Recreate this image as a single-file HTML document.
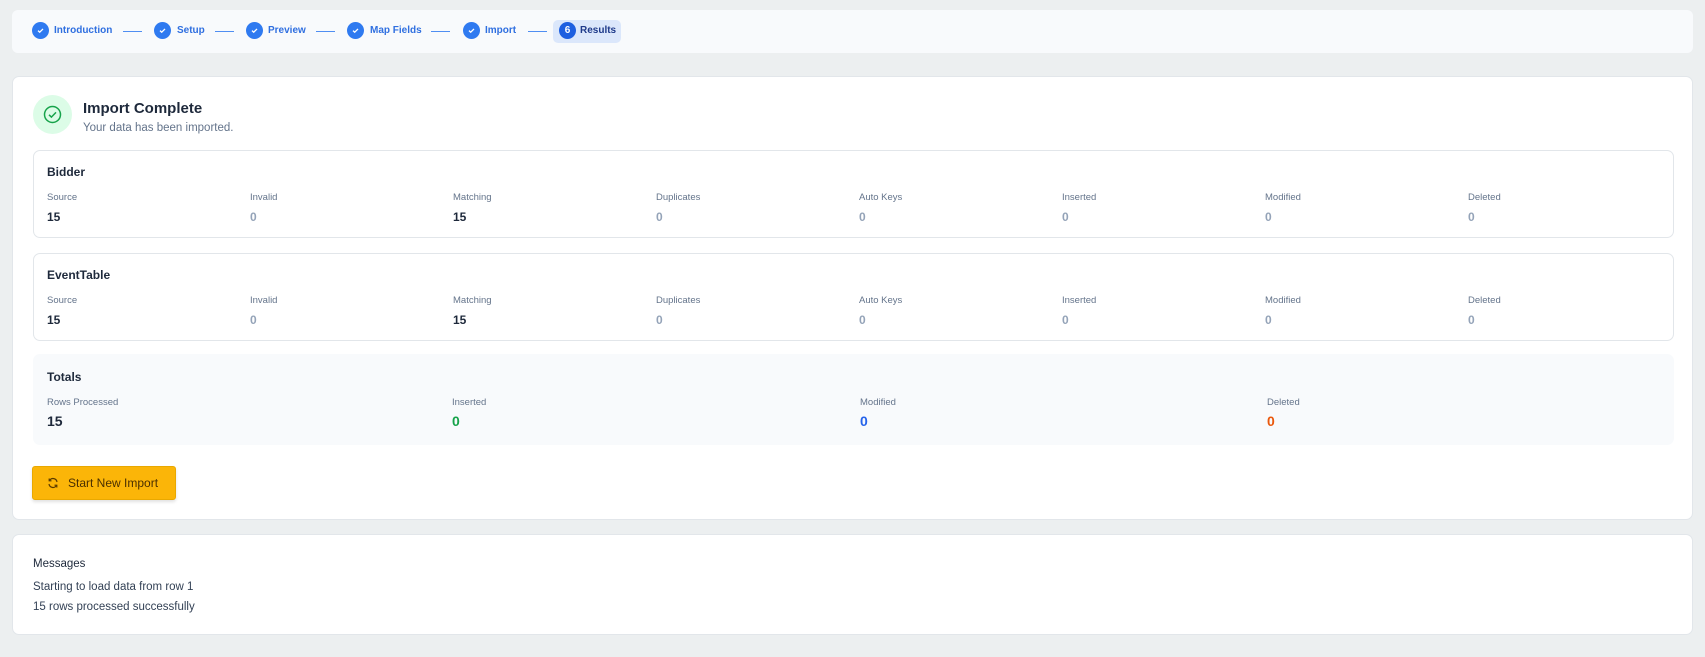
<!DOCTYPE html>
<html><head><meta charset="utf-8"><style>
*{box-sizing:border-box;margin:0;padding:0}
body{width:1705px;height:657px;background:#eceff0;font-family:"Liberation Sans",sans-serif;color:#1e293b;position:relative;overflow:hidden}
.abs{position:absolute}
.bar{left:12px;top:10px;width:1681px;height:43px;background:#f8fafc;border-radius:6px}
.c{width:17px;height:17px;border-radius:50%;background:#2f7af0;top:22px}
.c svg{position:absolute;left:4px;top:4px}
.st{top:25px;font-size:10px;font-weight:bold;color:#2f6fe0}
.ln{top:31px;height:1px;background:#4f8ef2;width:19px}
.card{background:#fff;border:1px solid #e2e6ea;border-radius:7px}
.sub{border:1px solid #e2e6ea;border-radius:7px;background:#fff}
.h{font-size:12px;font-weight:bold;color:#1e293b}
.lb{font-size:9.5px;color:#64748b}
.v{font-size:12px;font-weight:bold;color:#94a3b8}
.v.d{color:#1e293b}
</style></head><body>
<div class="abs bar"></div>
<div class="abs c" style="left:32px"><svg width="9" height="9" viewBox="0 0 9 9"><path d="M2 4.6l1.7 1.6L7 2.9" stroke="#fff" stroke-width="1.3" fill="none"/></svg></div>
<div class="abs st" style="left:54px">Introduction</div>
<div class="abs ln" style="left:123px"></div>
<div class="abs c" style="left:154px"><svg width="9" height="9" viewBox="0 0 9 9"><path d="M2 4.6l1.7 1.6L7 2.9" stroke="#fff" stroke-width="1.3" fill="none"/></svg></div>
<div class="abs st" style="left:177px">Setup</div>
<div class="abs ln" style="left:215px"></div>
<div class="abs c" style="left:246px"><svg width="9" height="9" viewBox="0 0 9 9"><path d="M2 4.6l1.7 1.6L7 2.9" stroke="#fff" stroke-width="1.3" fill="none"/></svg></div>
<div class="abs st" style="left:268px">Preview</div>
<div class="abs ln" style="left:316px"></div>
<div class="abs c" style="left:347px"><svg width="9" height="9" viewBox="0 0 9 9"><path d="M2 4.6l1.7 1.6L7 2.9" stroke="#fff" stroke-width="1.3" fill="none"/></svg></div>
<div class="abs st" style="left:370px">Map Fields</div>
<div class="abs ln" style="left:431px"></div>
<div class="abs c" style="left:463px"><svg width="9" height="9" viewBox="0 0 9 9"><path d="M2 4.6l1.7 1.6L7 2.9" stroke="#fff" stroke-width="1.3" fill="none"/></svg></div>
<div class="abs st" style="left:485px">Import</div>
<div class="abs ln" style="left:528px"></div>
<div class="abs" style="left:553px;top:20px;width:68px;height:23px;background:#dbe7fb;border-radius:5px"></div>
<div class="abs c" style="left:559px;background:#1d5fe0;color:#fff;font-size:10px;font-weight:bold;text-align:center;line-height:17px">6</div>
<div class="abs st" style="left:580px;color:#1e3a8a">Results</div>

<div class="abs card" style="left:12px;top:76px;width:1681px;height:444px"></div>
<div class="abs" style="left:33px;top:95px;width:39px;height:39px;border-radius:50%;background:#dcfce7"></div>
<svg class="abs" style="left:42px;top:104px" width="21" height="21" viewBox="0 0 21 21"><circle cx="10.5" cy="10.5" r="8" stroke="#16a34a" stroke-width="1.5" fill="none"/><path d="M7 10.8l2.4 2.3L14 8.4" stroke="#16a34a" stroke-width="1.5" fill="none"/></svg>
<div class="abs" style="left:83px;top:100px;font-size:15px;font-weight:bold;color:#1e293b">Import Complete</div>
<div class="abs" style="left:83px;top:122px;font-size:11.5px;color:#64748b">Your data has been imported.</div>

<div class="abs sub" style="left:33px;top:150px;width:1641px;height:88px"></div>
<div class="abs h" style="left:47px;top:165px">Bidder</div>
<div class="abs sub" style="left:33px;top:253px;width:1641px;height:88px"></div>
<div class="abs h" style="left:47px;top:268px">EventTable</div>

<div id="cols"></div>
<script>
var L=["Source","Invalid","Matching","Duplicates","Auto Keys","Inserted","Modified","Deleted"],V=["15","0","15","0","0","0","0","0"],h="";
[0,103].forEach(function(o){for(var i=0;i<8;i++){var x=47+i*203;h+='<div class="abs lb" style="left:'+x+'px;top:'+(192+o)+'px">'+L[i]+'</div><div class="abs v'+((i==0||i==2)?' d':'')+'" style="left:'+x+'px;top:'+(210+o)+'px">'+V[i]+'</div>';}});
document.getElementById("cols").innerHTML=h;
</script>

<div class="abs" style="left:33px;top:354px;width:1641px;height:91px;background:#f8fafc;border-radius:7px"></div>
<div class="abs h" style="left:47px;top:370px">Totals</div>
<div class="abs lb" style="left:47px;top:397px">Rows Processed</div>
<div class="abs" style="left:47px;top:413px;font-size:14px;font-weight:bold;color:#1e293b">15</div>
<div class="abs lb" style="left:452px;top:397px">Inserted</div>
<div class="abs" style="left:452px;top:413px;font-size:14px;font-weight:bold;color:#16a34a">0</div>
<div class="abs lb" style="left:860px;top:397px">Modified</div>
<div class="abs" style="left:860px;top:413px;font-size:14px;font-weight:bold;color:#2563eb">0</div>
<div class="abs lb" style="left:1267px;top:397px">Deleted</div>
<div class="abs" style="left:1267px;top:413px;font-size:14px;font-weight:bold;color:#ea580c">0</div>

<div class="abs" style="left:32px;top:466px;width:144px;height:34px;background:#fbb508;border:1px solid #e9a800;border-radius:3px;box-shadow:0 2px 3px rgba(0,0,0,.12)"></div>
<svg class="abs" style="left:47px;top:477px" width="12" height="12" viewBox="0 0 12 12"><path d="M10 5A4 4 0 0 0 2.6 3.5M2 7a4 4 0 0 0 7.4 1.5" stroke="#5a3a00" stroke-width="1.2" fill="none"/><path d="M2.2 1.5v2.3h2.3M9.8 10.5V8.2H7.5" stroke="#5a3a00" stroke-width="1.2" fill="none"/></svg>
<div class="abs" style="left:68px;top:476px;font-size:12px;color:#4a2f00">Start New Import</div>

<div class="abs card" style="left:12px;top:534px;width:1681px;height:101px"></div>
<div class="abs" style="left:33px;top:558px;font-size:11.5px;color:#1e293b">Messages</div>
<div class="abs" style="left:33px;top:581px;font-size:11.5px;color:#334155">Starting to load data from row 1</div>
<div class="abs" style="left:33px;top:601px;font-size:11.5px;color:#334155">15 rows processed successfully</div>
</body></html>
